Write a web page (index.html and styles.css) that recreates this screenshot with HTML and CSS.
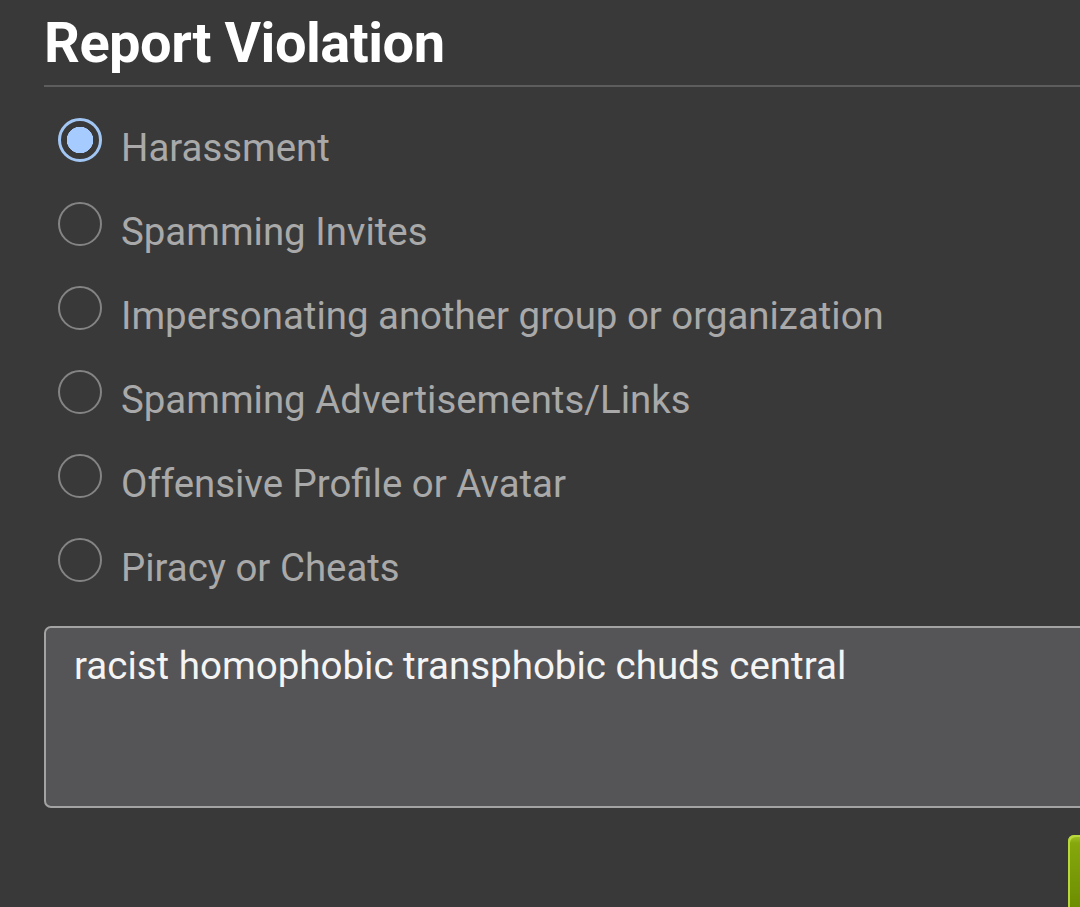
FILE: index.html
```html
<!DOCTYPE html>
<html lang="en">
<head>
<meta charset="utf-8">
<title>Report Violation</title>
<link rel="stylesheet" href="styles.css">
</head>
<body>
<div class="page">
  <h1 class="title">Report Violation</h1>
  <div class="rule"></div>
  <ul class="options">
    <li class="option"><span class="radio checked"></span><span class="label">Harassment</span></li>
    <li class="option"><span class="radio"></span><span class="label">Spamming Invites</span></li>
    <li class="option"><span class="radio"></span><span class="label">Impersonating another group or organization</span></li>
    <li class="option"><span class="radio"></span><span class="label">Spamming Advertisements/Links</span></li>
    <li class="option"><span class="radio"></span><span class="label">Offensive Profile or Avatar</span></li>
    <li class="option"><span class="radio"></span><span class="label">Piracy or Cheats</span></li>
  </ul>
  <div class="textbox">racist homophobic transphobic chuds central</div>
  <div class="actions"><span class="button"></span></div>
</div>
</body>
</html>
```

FILE: styles.css
```css
html, body {
  margin: 0;
  padding: 0;
  background: #393939;
  overflow: hidden;
  width: 1080px;
  height: 907px;
}

.page {
  width: 1200px;
  box-sizing: border-box;
  padding-left: 44px;
  font-family: Roboto, "Noto Sans", sans-serif;
}

.title {
  margin: 0;
  padding-top: 10px;
  height: 76px;
  box-sizing: border-box;
  font-size: 56px;
  font-weight: 700;
  line-height: 66px;
  color: #ffffff;
  letter-spacing: -0.5px;
}

.rule {
  height: 2px;
  background: #5d5d5d;
  margin-top: 9px;
}

.options {
  list-style: none;
  margin: 19px 0 0 0;
  padding: 0;
}

.option {
  display: flex;
  align-items: center;
  height: 84px;
  padding-left: 14px;
}

.radio {
  width: 44px;
  height: 44px;
  box-sizing: border-box;
  border-radius: 50%;
  border: 2.5px solid #848484;
  margin-right: 19px;
  flex: none;
  margin-top: -16px;
}

.radio.checked {
  border: 3px solid #a2c6f3;
  background: radial-gradient(circle, #a6cbff 0 13px, #393939 13.5px);
}

.label {
  font-size: 38.4px;
  color: #a9a9a9;
  line-height: 84px;
}

.textbox {
  margin-top: 16px;
  height: 182px;
  box-sizing: border-box;
  background: #555557;
  border: 2px solid #a3a3a3;
  border-radius: 7px;
  padding: 16px 28px;
  font-size: 38.5px;
  color: #f4f4f4;
  line-height: 44px;
}

.actions {
  display: flex;
  justify-content: flex-end;
  margin-top: 27px;
}

.button {
  width: 132px;
  height: 80px;
  border-radius: 6px;
  background: linear-gradient(#a6c62a 0, #86a80c 8px, #6a8a00 100%);
  box-shadow: inset 2px 2px 0 #b8d83c;
}
```
